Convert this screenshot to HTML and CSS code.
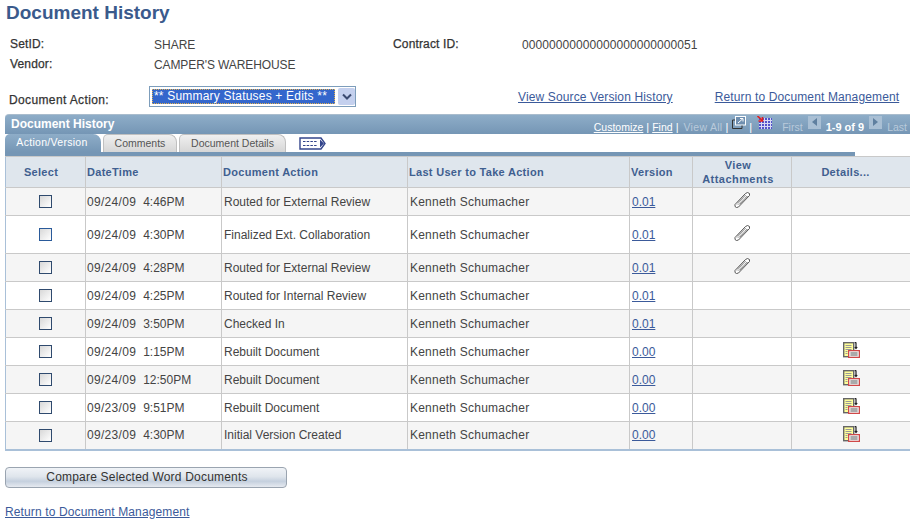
FILE: index.html
```html
<!DOCTYPE html>
<html lang="en">
<head>
<meta charset="utf-8">
<title>Document History</title>
<link rel="stylesheet" href="styles.css">
</head>
<body>
<svg class="defs" width="0" height="0" aria-hidden="true">
  <symbol id="clip" viewBox="0 0 16 16">
    <path d="M2.5 15.5 L1 14.5 L1 12.5 L11.5 1.5 L13.5 0.5 L15.5 1.5 L15.5 3.5 L4.5 15 Z" fill="#fff" stroke="#555" stroke-width="1"/>
    <path d="M3 12.5 L12 3 M4.5 13 L13 4 M3.5 11 L11 3.5 M6 12 L14 4" stroke="#777" stroke-width="1" fill="none" stroke-dasharray="1 0.6"/>
  </symbol>
  <symbol id="details" viewBox="0 0 17 16">
    <rect x="0.7" y="0.7" width="10" height="14" fill="#ffff99" stroke="#666" stroke-width="1.4"/>
    <path d="M2.5 3.5h6M2.5 5.5h6M2.5 7.5h6M2.5 9.5h2M2.5 11.5h2" stroke="#999" stroke-width="1"/>
    <path d="M13 0.5v5.5M11.7 0.7h1.5M11.8 5l1.2 1.6 1.2-1.6" stroke="#222" stroke-width="1.2" fill="none"/>
    <rect x="5.6" y="8.6" width="10.8" height="6.8" fill="#eee" stroke="#d04848" stroke-width="1.2"/>
    <path d="M7.5 11h7M7.5 13h7" stroke="#666" stroke-width="1"/>
  </symbol>
</svg>
<main class="page">
  <h1 class="title">Document History</h1>
  <section class="fields">
    <div class="label l-setid">SetID:</div><div class="value">SHARE</div>
    <div class="label l-contract">Contract ID:</div><div class="value v-contract">00000000000000000000000051</div>
    <div class="label">Vendor:</div><div class="value v-vendor">CAMPER'S WAREHOUSE</div>
  </section>
  <section class="action-row">
    <div class="label action-label">Document Action:</div>
    <div class="select">
      <span class="select-text"><span class="select-focus">** Summary Statuses + Edits **</span></span>
      <span class="select-btn"><svg width="10" height="7" viewBox="0 0 10 7"><path d="M1 1.5 L5 5.5 L9 1.5" fill="none" stroke="#3a4a70" stroke-width="2"/></svg></span>
    </div>
    <a class="link link-source" href="#">View Source Version History</a>
    <a class="link link-return" href="#">Return to Document Management</a>
  </section>
  <section class="grid">
    <div class="grid-bar">
      <span class="grid-title">Document History</span>
      <div class="grid-nav">
        <a class="nav-link" href="#">Customize</a><span class="sep">|</span><a class="nav-link" href="#">Find</a><span class="sep">|</span><span class="nav-dim nav-all">View All</span><span class="sep">|</span>
        <svg class="nav-zoom" width="14" height="13" viewBox="0 0 14 13"><rect x="3.5" y="0.5" width="10" height="8.5" fill="#6f8fb0" stroke="#fff"/><path d="M3 4H0.5V12.5H10V9.5" fill="none" stroke="#333"/><path d="M6 7L10.5 3M8 2.5h3v3" stroke="#fff" fill="none"/></svg>
        <span class="sep">|</span>
        <svg class="nav-dl" width="15" height="13" viewBox="0 0 15 13"><rect x="2" y="2" width="13" height="11" fill="#5252cc"/><path d="M4.5 2v11M7.5 2v11M10.5 2v11M13.5 2v11M2 4.5h13M2 7.5h13M2 10.5h13" stroke="#d8d8f4"/><path d="M0.5 0l5 4.5M1.5 5h4V1" stroke="#e02020" stroke-width="1.6" fill="none"/></svg>
        <span class="nav-dim nav-first">First</span>
        <span class="nav-arrow"><i class="tri-left"></i></span>
        <span class="nav-count">1-9 of 9</span>
        <span class="nav-arrow"><i class="tri-right"></i></span>
        <span class="nav-dim nav-last">Last</span>
      </div>
    </div>
    <div class="tabs">
      <span class="tab tab-active">Action/Version</span>
      <span class="tab tab-comments">Comments</span>
      <span class="tab tab-docs">Document Details</span>
      <svg class="tab-show" width="27" height="13" viewBox="0 0 27 13"><path d="M1 1H22L26 6.5L22 12H1Z" fill="#fff" stroke="#33458c" stroke-width="1.4"/><path d="M4 4.5h14M4 8.5h14" stroke="#33458c" stroke-dasharray="2.5 1.2"/><path d="M21 2.5L25 6.5L21 10.5Z" fill="#33458c"/></svg>
    </div>
    <div class="tab-rule"></div>
    <table class="data">
      <colgroup>
        <col class="c1"><col class="c2"><col class="c3"><col class="c4"><col class="c5"><col class="c6"><col class="c7">
      </colgroup>
      <thead>
        <tr>
          <th class="center">Select</th><th>DateTime</th><th>Document Action</th><th>Last User to Take Action</th><th>Version</th><th class="center">View<br>Attachments</th><th class="center">Details...</th>
        </tr>
      </thead>
      <tbody>
        <tr class="odd"><td class="center"><span class="check"></span></td><td class="dt"><span>09/24/09</span><span>4:46PM</span></td><td>Routed for External Review</td><td class="user">Kenneth Schumacher</td><td><a class="ver" href="#">0.01</a></td><td class="center"><svg class="clip" width="16" height="16"><use href="#clip"/></svg></td><td></td></tr>
        <tr class="even tall"><td class="center"><span class="check check-blue"></span></td><td class="dt"><span>09/24/09</span><span>4:30PM</span></td><td>Finalized Ext. Collaboration</td><td class="user">Kenneth Schumacher</td><td><a class="ver" href="#">0.01</a></td><td class="center"><svg class="clip" width="16" height="16"><use href="#clip"/></svg></td><td></td></tr>
        <tr class="odd"><td class="center"><span class="check"></span></td><td class="dt"><span>09/24/09</span><span>4:28PM</span></td><td>Routed for External Review</td><td class="user">Kenneth Schumacher</td><td><a class="ver" href="#">0.01</a></td><td class="center"><svg class="clip" width="16" height="16"><use href="#clip"/></svg></td><td></td></tr>
        <tr class="even"><td class="center"><span class="check"></span></td><td class="dt"><span>09/24/09</span><span>4:25PM</span></td><td>Routed for Internal Review</td><td class="user">Kenneth Schumacher</td><td><a class="ver" href="#">0.01</a></td><td></td><td></td></tr>
        <tr class="odd"><td class="center"><span class="check"></span></td><td class="dt"><span>09/24/09</span><span>3:50PM</span></td><td>Checked In</td><td class="user">Kenneth Schumacher</td><td><a class="ver" href="#">0.01</a></td><td></td><td></td></tr>
        <tr class="even"><td class="center"><span class="check"></span></td><td class="dt"><span>09/24/09</span><span>1:15PM</span></td><td>Rebuilt Document</td><td class="user">Kenneth Schumacher</td><td><a class="ver" href="#">0.00</a></td><td></td><td class="center"><svg class="det" width="17" height="16"><use href="#details"/></svg></td></tr>
        <tr class="odd"><td class="center"><span class="check"></span></td><td class="dt"><span>09/24/09</span><span>12:50PM</span></td><td>Rebuilt Document</td><td class="user">Kenneth Schumacher</td><td><a class="ver" href="#">0.00</a></td><td></td><td class="center"><svg class="det" width="17" height="16"><use href="#details"/></svg></td></tr>
        <tr class="even"><td class="center"><span class="check"></span></td><td class="dt"><span>09/23/09</span><span>9:51PM</span></td><td>Rebuilt Document</td><td class="user">Kenneth Schumacher</td><td><a class="ver" href="#">0.00</a></td><td></td><td class="center"><svg class="det" width="17" height="16"><use href="#details"/></svg></td></tr>
        <tr class="odd"><td class="center"><span class="check"></span></td><td class="dt"><span>09/23/09</span><span>4:30PM</span></td><td>Initial Version Created</td><td class="user">Kenneth Schumacher</td><td><a class="ver" href="#">0.00</a></td><td></td><td class="center"><svg class="det" width="17" height="16"><use href="#details"/></svg></td></tr>
      </tbody>
    </table>
  </section>
  <button class="compare" type="button">Compare Selected Word Documents</button>
  <a class="link link-bottom" href="#">Return to Document Management</a>
</main>
</body>
</html>
```
FILE: styles.css
```css
html, body { margin: 0; padding: 0; background: #fff; }
body { width: 910px; height: 525px; overflow: hidden; font-family: "Liberation Sans", Arial, sans-serif; font-size: 12px; color: #444; }
.defs { position: absolute; }
.page { padding: 0 0 0 5px; }
.title { margin: 0; padding: 2px 0 0 1px; height: 30px; font-size: 19px; line-height: 21px; font-weight: bold; color: #3a5a8c; box-sizing: border-box; }
.fields { display: grid; grid-template-columns: 144px 239px 129px auto; grid-auto-rows: 20px; margin-top: 7px; padding-left: 5px; height: 40px; }
.label { color: #333; letter-spacing: 0.15px; -webkit-text-stroke: 0.25px #333; }
.value { color: #444; padding-top: 1px; }
.v-contract { letter-spacing: 0.08px; }
.v-vendor { letter-spacing: -0.1px; }
.fields .label { line-height: 15px; }
.fields .value { line-height: 15px; }
.action-row { display: flex; align-items: flex-start; margin-top: 8px; height: 29px; padding-left: 4px; }
.action-label { width: 140px; padding-top: 8px; line-height: 15px; letter-spacing: 0.37px; }
.select { width: 207px; height: 21px; margin-top: 1px; border: 1px solid #7d9dbb; box-sizing: border-box; display: flex; align-items: center; padding-left: 2px; background: #fff; }
.select-text { width: 183px; height: 15px; background: #3366cc; color: #fff; line-height: 15px; white-space: nowrap; letter-spacing: 0.2px; }
.select-focus { display: block; outline: 1px dotted #e0b050; outline-offset: -1px; padding-left: 2px; height: 15px; }
.select-btn { width: 17px; height: 17px; margin-left: 3px; background: #c4d0ee; display: flex; align-items: center; justify-content: center; border-radius: 2px; }
.link { color: #3b5a9a; text-decoration: underline; text-decoration-color: #3b5a9a; letter-spacing: 0.13px; }
.link-source { margin-left: 162px; padding-top: 5px; line-height: 15px; }
.link-return { margin-left: 42px; padding-top: 5px; line-height: 15px; }
.grid { margin-top: 0; width: 905px; }
.grid-bar { height: 20px; box-sizing: border-box; border-top: 1px solid #a9bccd; border-radius: 4px 0 0 0; background: linear-gradient(#8eadc8, #7596b5); display: flex; align-items: center; justify-content: space-between; padding: 0 3px 0 6px; }
.grid-title { color: #fff; font-weight: bold; font-size: 12px; margin-bottom: 2px; }
.grid-nav { display: flex; align-items: center; font-size: 10.5px; color: #fff; padding-top: 4px; }
.nav-link { color: #fff; text-decoration: underline; }
.sep { margin: 0 3px; color: #fff; font-size: 11px; }
.nav-dim { color: #b9cadb; }
.nav-all { letter-spacing: 0.3px; margin-left: 2px; }
.nav-zoom { margin: 0 0 9px 1px; }
.nav-dl { margin: 0 0 9px 2px; }
.nav-first { margin-left: 10px; }
.nav-arrow { width: 13px; height: 13px; margin: 0 5px 9px; background: #a9bfd4; display: flex; align-items: center; justify-content: center; }
.tri-left { border: 4px solid transparent; border-left: 0; border-right: 5px solid #5f7f9f; }
.tri-right { border: 4px solid transparent; border-right: 0; border-left: 5px solid #5f7f9f; }
.nav-count { font-weight: bold; font-size: 11px; }
.tabs { display: flex; align-items: flex-end; height: 18px; padding-left: 0; }
.tab { box-sizing: border-box; height: 18px; line-height: 16px; font-size: 10.5px; text-align: center; border-radius: 5px 8px 0 0; color: #555; background: linear-gradient(#f0f0f0, #d6d6d6); border: 1px solid #c0c0c0; border-bottom: 0; }
.tab-active { width: 96px; padding-right: 2px; color: #fff; background: linear-gradient(#8eadc8, #7596b5); border: 0; letter-spacing: 0.3px; }
.tab-comments { width: 74px; margin-left: 2px; }
.tab-docs { width: 107px; margin-left: 2px; }
.tab-show { margin: 0 0 2px 13px; }
.tab-rule { height: 4px; width: 850px; background: #7596b5; }
.data { border-collapse: collapse; table-layout: fixed; width: 905px; }
.c1 { width: 80px; } .c2 { width: 136px; } .c3 { width: 186px; } .c4 { width: 222px; } .c5 { width: 63px; } .c6 { width: 99px; } .c7 { width: 119px; }
.data th { height: 31px; box-sizing: border-box; background: #dfe6ed; border: 1px solid #c9c9c9; color: #3f5f90; font-size: 11px; line-height: 14px; font-weight: bold; text-align: left; padding: 0 1px; letter-spacing: 0.3px; }
.data th.center { text-align: center; padding-right: 10px; }
.data th:nth-child(6) { padding-right: 9px; letter-spacing: 0.45px; }
.data th:nth-child(7) { padding-right: 12px; }
.data td.center { text-align: center; }
.data td { height: 28px; box-sizing: border-box; border: 1px solid #c9c9c9; padding: 0 1px 0 2px; color: #444; white-space: nowrap; }
.data td:first-child { padding: 0; }
.data td.dt { padding-left: 1px; letter-spacing: 0.3px; }
.data td.user { letter-spacing: 0.22px; }
.data tr.tall td { height: 38px; }
.data tr.odd td { background: #f5f5f5; }
.data tr.even td { background: #fff; }
.data tbody tr:last-child td { border-bottom: 2px solid #a9c0d8; }
.data tr > :first-child { border-left: 1px solid #a9c0d8; }
.data tr > :last-child { border-right: 1px solid #a9c0d8; }
.dt span + span { margin-left: 7px; letter-spacing: 0; }
.check { display: inline-block; width: 13px; height: 13px; box-sizing: border-box; border: 1px solid #2f4a6e; background: linear-gradient(135deg, #d8d8d8, #fff); vertical-align: middle; margin-top: -2px; }
.check-blue { border-color: #2a5a9a; }
.ver { color: #3b5a9a; text-decoration: underline; }
.clip { display: inline-block; vertical-align: middle; margin: -4px 2px 0 0; }
.det { display: inline-block; vertical-align: middle; margin-top: -5px; }
.compare { display: block; margin-top: 16px; width: 282px; height: 21px; box-sizing: border-box; border: 1px solid #9aa4b0; border-radius: 4px; background: linear-gradient(#f0f3f7 0%, #dfe5ec 45%, #c5d0de 70%, #e6eaf0 100%); color: #333; font-family: inherit; font-size: 12px; padding: 0 0 0 2px; letter-spacing: 0.2px; }
.link-bottom { display: block; margin-top: 17px; width: fit-content; line-height: 15px; }
```
